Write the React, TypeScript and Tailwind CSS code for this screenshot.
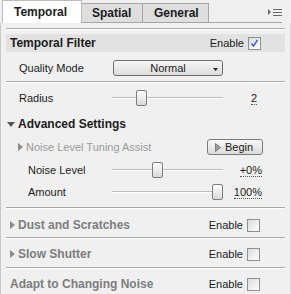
import React from "react";

const font = { fontFamily: '"Liberation Sans", Arial, sans-serif' };

const Checkbox = ({ checked = false }: { checked?: boolean }) => (
  <div className="w-[13px] h-[13px] border border-[#8e8f8f] bg-gradient-to-br from-[#dcdcdc] to-white flex items-center justify-center">
    {checked && (
      <svg width="9" height="9" viewBox="0 0 9 9">
        <path d="M1.5 4.5 L3.5 7 L7.5 1" stroke="#3a63c8" strokeWidth="1.5" fill="none" />
      </svg>
    )}
  </div>
);

const Enable = ({ checked = false }: { checked?: boolean }) => (
  <div className="flex items-center gap-[4px] text-[11px] text-[#1b1b1b]">
    <span>Enable</span>
    <Checkbox checked={checked} />
  </div>
);

const Separator = () => <div className="mx-[5px] h-[2px] border-t border-[#a9a9a9] border-b border-b-white" />;

const Slider = ({ pos }: { pos: number }) => (
  <div className="relative w-[111px] h-[20px]">
    <div className="absolute left-0 right-0 top-[9px] h-[2px] border-t border-[#bdbdbd] border-b border-b-white" />
    <div
      className="absolute top-[2px] w-[11px] h-[16px] rounded-[2px] border border-[#7c7c7c] bg-gradient-to-b from-white to-[#d8d8d8]"
      style={{ left: pos }}
    />
  </div>
);

const Value = ({ children }: { children: React.ReactNode }) => (
  <span className="text-[11px] text-[#1b1b1b] border-b border-dotted border-[#555] leading-[12px]">{children}</span>
);

const RightTri = ({ color = "#777" }: { color?: string }) => (
  <svg width="5" height="8" viewBox="0 0 5 8">
    <path d="M0 0 L5 4 L0 8 Z" fill={color} />
  </svg>
);

export default function App() {
  return (
    <div className="w-[291px] h-[294px] bg-[#f0f0f0] overflow-hidden text-[#1b1b1b]" style={font}>
      {/* tab bar */}
      <div className="flex items-end h-[23px] pl-[2px] pr-[9px]">
        <div className="h-[23px] w-[80px] bg-white border border-b-0 border-[#bdbdbd] flex items-center pl-[11px] text-[12px] font-bold">
          Temporal
        </div>
        <div className="h-[20px] w-[61px] bg-[#dedede] border border-[#a6a6a6] border-l-0 flex items-center pl-[10px] text-[12px] font-bold">
          Spatial
        </div>
        <div className="h-[20px] w-[66px] bg-[#dedede] border border-[#a6a6a6] border-l-0 flex items-center pl-[11px] text-[12px] font-bold">
          General
        </div>
        <div className="flex-1 h-[20px] border-b border-[#a6a6a6] flex items-start justify-end pt-[5px]">
          <svg width="14" height="8" viewBox="0 0 14 8">
            <path d="M0 1 L3 4 L0 7 Z" fill="#6b6b6b" />
            <rect x="5" y="1" width="9" height="1" fill="#6b6b6b" />
            <rect x="5" y="4" width="9" height="1" fill="#6b6b6b" />
            <rect x="5" y="7" width="9" height="1" fill="#6b6b6b" />
          </svg>
        </div>
      </div>

      {/* panel */}
      <div className="h-[271px] border-l border-[#c8c8c8] border-r border-r-[#d8d8d8] flex flex-col">
        <div className="mt-[5px]">
          <Separator />
        </div>
        <div className="mt-[4px] mx-[5px] h-[18px] bg-[#e2e2e2] flex items-center justify-between pl-[4px] pr-[24px]">
          <span className="text-[12px] font-bold">Temporal Filter</span>
          <Enable checked />
        </div>

        <div className="mt-[8px] h-[16px] flex items-center pl-[18px]">
          <span className="w-[94px] text-[11px]">Quality Mode</span>
          <div className="w-[110px] h-[16px] rounded-[3px] border border-[#6e6e6e] bg-gradient-to-b from-[#f7f7f7] to-[#dcdcdc] flex items-center justify-center relative">
            <span className="text-[11px]">Normal</span>
            <svg className="absolute right-[4px] top-[7px]" width="5" height="3" viewBox="0 0 5 3">
              <path d="M0 0 L5 0 L2.5 3 Z" fill="#222" />
            </svg>
          </div>
        </div>

        <div className="mt-[5px]">
          <Separator />
        </div>

        <div className="mt-[5px] h-[20px] flex items-center pl-[18px]">
          <span className="w-[93px] text-[11px]">Radius</span>
          <Slider pos={24} />
          <div className="w-[34px] flex justify-end">
            <Value>2</Value>
          </div>
        </div>

        <div className="mt-[8px] h-[16px] flex items-center pl-[6px] gap-[3px]">
          <svg width="8" height="5" viewBox="0 0 8 5">
            <path d="M0 0 L8 0 L4 5 Z" fill="#555" />
          </svg>
          <span className="text-[12px] font-bold">Advanced Settings</span>
        </div>

        <div className="mt-[7px] h-[16px] flex items-center pl-[17px] pr-[27px]">
          <RightTri color="#8c8c8c" />
          <span className="ml-[3px] text-[11px] text-[#9a9a9a] flex-1">Noise Level Tuning Assist</span>
          <div className="w-[56px] h-[16px] rounded-[3px] border border-[#7a7a7a] bg-gradient-to-b from-[#f7f7f7] to-[#dcdcdc] flex items-center pl-[7px] gap-[4px]">
            <svg width="6" height="9" viewBox="0 0 6 9">
              <path d="M0.5 0.5 L5.5 4.5 L0.5 8.5 Z" fill="#9a9a9a" stroke="#6a6a6a" strokeWidth="0.8" />
            </svg>
            <span className="text-[11px]">Begin</span>
          </div>
        </div>

        <div className="mt-[6px] h-[18px] flex items-center pl-[27px]">
          <span className="w-[84px] text-[11px]">Noise Level</span>
          <Slider pos={40} />
          <div className="w-[39px] flex justify-end">
            <Value>+0%</Value>
          </div>
        </div>

        <div className="mt-[4px] h-[18px] flex items-center pl-[27px]">
          <span className="w-[84px] text-[11px]">Amount</span>
          <Slider pos={100} />
          <div className="w-[39px] flex justify-end">
            <Value>100%</Value>
          </div>
        </div>

        <div className="mt-[6px]">
          <Separator />
        </div>

        <div className="mt-[9px] h-[14px] flex items-center justify-between pl-[9px] pr-[30px]">
          <div className="flex items-center gap-[3px]">
            <RightTri color="#8a8a8a" />
            <span className="text-[12px] font-bold text-[#7d7d7d]">Dust and Scratches</span>
          </div>
          <Enable />
        </div>

        <div className="mt-[5px]">
          <Separator />
        </div>

        <div className="mt-[8px] h-[14px] flex items-center justify-between pl-[9px] pr-[30px]">
          <div className="flex items-center gap-[3px]">
            <RightTri color="#8a8a8a" />
            <span className="text-[12px] font-bold text-[#7d7d7d]">Slow Shutter</span>
          </div>
          <Enable />
        </div>

        <div className="mt-[6px]">
          <Separator />
        </div>

        <div className="mt-[8px] h-[14px] flex items-center justify-between pl-[9px] pr-[30px]">
          <span className="text-[12px] font-bold text-[#7d7d7d]">Adapt to Changing Noise</span>
          <Enable />
        </div>
      </div>
    </div>
  );
}
